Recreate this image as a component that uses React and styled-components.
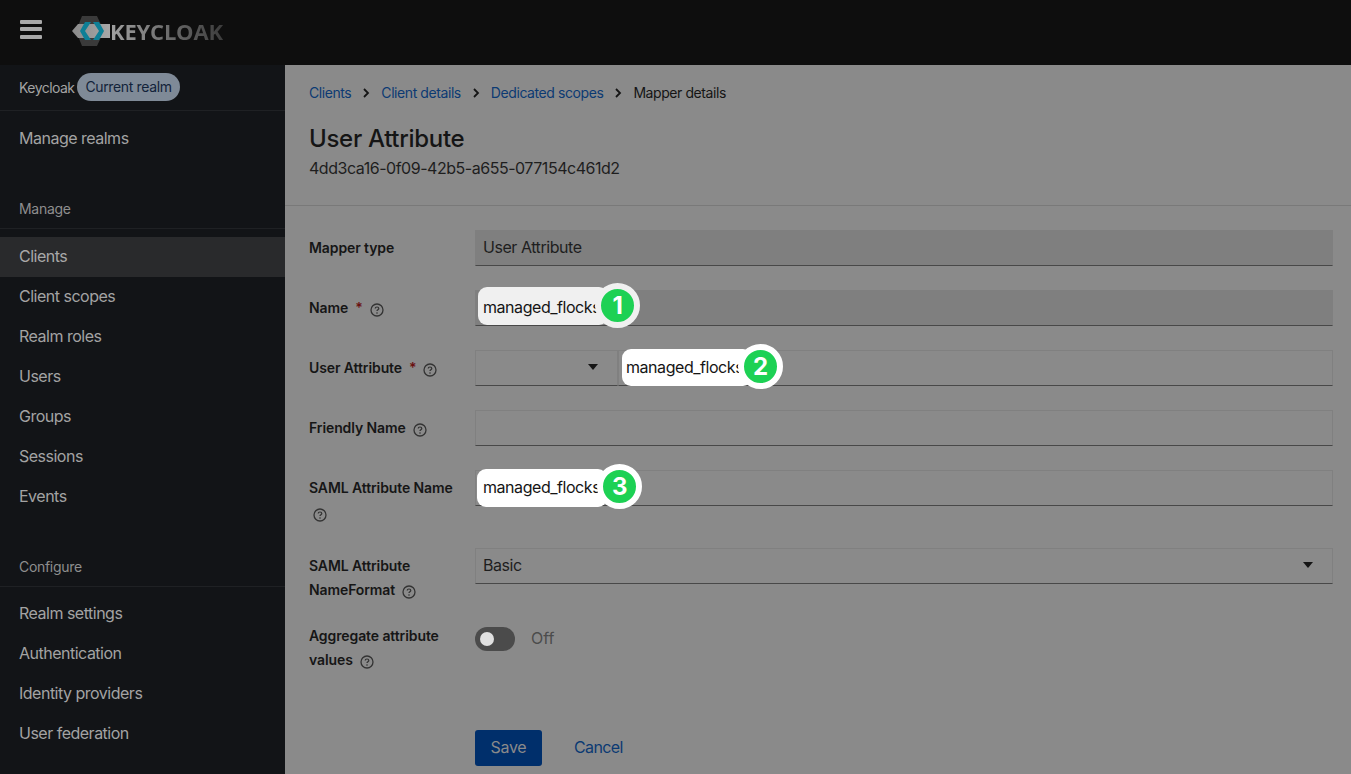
import React from "react";
import styled, { createGlobalStyle } from "styled-components";

const GlobalStyle = createGlobalStyle`
  html, body {
    margin: 0;
    height: 100%;
    overflow: hidden;
    background: #8a8a8a;
    font-family: "Inter", "Liberation Sans", sans-serif;
    letter-spacing: -0.3px;
  }
`;

const Page = styled.div`
  width: 1351px;
  height: 774px;
  display: flex;
  flex-direction: column;
  overflow: hidden;
`;

const Masthead = styled.header`
  height: 65px;
  flex: none;
  display: flex;
  align-items: center;
  padding-left: 20px;
  background: #0e0e0e;
`;

const Burger = styled.div`
  width: 22px;
  display: flex;
  flex-direction: column;
  gap: 3.5px;
  margin-right: 30px;
  margin-top: -7px;
  span {
    height: 4px;
    border-radius: 1px;
    background: #a9a9a9;
  }
`;

const Brand = styled.div`
  display: flex;
  align-items: center;
  margin-top: -4px;
`;

const BrandText = styled.span`
  font-family: "Open Sans", sans-serif;
  font-size: 22px;
  font-weight: 700;
  letter-spacing: -0.2px;
  background: linear-gradient(90deg, #a0a0a0, #3c3c3c);
  -webkit-background-clip: text;
  background-clip: text;
  color: transparent;
`;

const Body = styled.div`
  flex: 1;
  display: flex;
  min-height: 0;
`;

const Sidebar = styled.nav`
  width: 285px;
  flex: none;
  background: #121417;
  color: #a3a3a3;
  font-size: 16px;
  letter-spacing: -0.5px;
`;

const RealmRow = styled.div`
  height: 45px;
  box-sizing: content-box;
  display: flex;
  align-items: center;
  padding-left: 19px;
  margin-bottom: 8px;
  font-size: 14px;
  border-bottom: 1px solid #1f2124;
`;

const RealmName = styled.span`
  margin-top: -1px;
  letter-spacing: -0.55px;
`;

const RealmBadge = styled.span`
  margin: -1px 0 0 3px;
  height: 28px;
  line-height: 27px;
  padding: 0 8px;
  border-radius: 14px;
  background: #7f8a97;
  color: #12233a;
  font-size: 14px;
  letter-spacing: -0.35px;
`;

const NavItem = styled.div`
  height: 40px;
  line-height: 39px;
  padding-left: 19px;
  background: ${(p) => (p.$active ? "#292a2c" : "transparent")};
  color: ${(p) => (p.$active ? "#a8a8a8" : "#a3a3a3")};
`;

const NavHeading = styled.div`
  height: 35px;
  line-height: 32px;
  margin-top: 34px;
  margin-bottom: ${(p) => p.$bottom}px;
  padding-left: 19px;
  font-size: 14px;
  letter-spacing: -0.3px;
  color: #8e8e8e;
  border-bottom: 1px solid #1f2124;
`;

const Main = styled.main`
  flex: 1;
  background: #8a8a8a;
  color: #151515;
  min-width: 0;
`;

const PageHead = styled.div`
  height: 141px;
  box-sizing: border-box;
  padding: 18px 24px 0;
  border-bottom: 1px solid #797979;
`;

const Crumbs = styled.div`
  display: flex;
  align-items: center;
  height: 19px;
  font-size: 14px;
  letter-spacing: -0.42px;
`;

const Crumb = styled.span`
  color: ${(p) => (p.$current ? "#151515" : "#0c3a73")};
`;

const CrumbSep = styled.svg`
  width: 8px;
  height: 10px;
  margin: 0 11px;
`;

const Title = styled.h1`
  margin: 21px 0 0;
  font-size: 24px;
  line-height: 32px;
  font-weight: 500;
  color: #151515;
`;

const Subtitle = styled.div`
  margin-top: 1px;
  font-size: 16px;
  line-height: 24px;
  letter-spacing: -0.47px;
  color: #1e1e1e;
`;

const Form = styled.div`
  display: flex;
  flex-direction: column;
  gap: 24px;
  padding: 24px 18px 0 24px;
`;

const Row = styled.div`
  display: grid;
  grid-template-columns: 166px 1fr;
`;

const Label = styled.div`
  font-size: 14px;
  font-weight: 600;
  line-height: 24px;
  letter-spacing: -0.1px;
  padding-top: ${(p) => (p.$raised ? 0 : 6)}px;
  margin-top: ${(p) => (p.$raised ? -2 : 0)}px;
  color: #161616;
`;

const Required = styled.span`
  color: #6a1010;
  margin-left: 7px;
`;

const HelpSvg = styled.svg`
  width: 14px;
  height: 14px;
  margin-left: ${(p) => (p.$flush ? 4 : 7)}px;
  vertical-align: -4px;
`;

const HelpLine = styled.div`
  height: 24px;
  line-height: 26px;
`;

const Control = styled.div`
  position: relative;
  display: flex;
`;

const Input = styled.div`
  flex: ${(p) => (p.$narrow ? "none" : "1")};
  width: ${(p) => (p.$narrow ? "143px" : "auto")};
  height: 36px;
  box-sizing: border-box;
  display: flex;
  align-items: center;
  justify-content: space-between;
  padding: 0 7px 2px;
  font-size: 16px;
  letter-spacing: -0.45px;
  color: #1e1e1e;
  background: ${(p) => (p.$filled ? "#7f7f7f" : "transparent")};
  border: 1px solid ${(p) => (p.$filled ? "transparent" : "#808080")};
  border-bottom: 1px solid #484848;
`;

const Caret = styled.svg`
  width: 10px;
  height: 6px;
  margin-right: ${(p) => p.$right}px;
`;

const Callout = styled.div`
  position: absolute;
  left: ${(p) => p.$left}px;
  top: ${(p) => p.$top}px;
  width: 130px;
  height: ${(p) => p.$height}px;
  box-sizing: border-box;
  display: flex;
  align-items: center;
  padding: ${(p) => Math.max(p.$nudge, 0)}px 0 ${(p) => Math.max(-p.$nudge, 0)}px ${(p) => p.$pad}px;
  border-radius: 9px;
  font-size: 16px;
  letter-spacing: -0.45px;
  color: #151515;
  background: ${(p) => (p.$dim ? "#f0f0f0" : "#ffffff")};
`;

const Marker = styled.div`
  position: absolute;
  left: ${(p) => p.$left}px;
  top: ${(p) => p.$top}px;
  width: 33px;
  height: 33px;
  box-sizing: content-box;
  border: 6px solid ${(p) => (p.$dim ? "#f0f0f0" : "#ffffff")};
  border-radius: 50%;
  background: #1dd154;
  color: #ffffff;
  font-size: 24px;
  font-weight: 700;
  line-height: 33px;
  text-align: center;
`;

const ToggleRow = styled.div`
  display: flex;
  align-items: center;
  gap: 16px;
  height: 24px;
  margin-top: 1px;
  font-size: 16px;
  letter-spacing: 0;
  color: #4c4c4c;
`;

const ToggleState = styled.span`
  margin-top: -2px;
`;

const Toggle = styled.div`
  width: 40px;
  height: 24px;
  border-radius: 12px;
  background: #4b4b4b;
  position: relative;
  &::after {
    content: "";
    position: absolute;
    left: 5px;
    top: 5px;
    width: 14px;
    height: 14px;
    border-radius: 50%;
    background: #e0e0e0;
  }
`;

const Actions = styled.div`
  display: flex;
  align-items: center;
  gap: 32px;
  margin: 34px 0 0 166px;
`;

const SaveButton = styled.div`
  width: 67px;
  height: 36px;
  line-height: 35px;
  text-align: center;
  border-radius: 3px;
  background: #002f6b;
  color: #8a8a8a;
  font-size: 16px;
`;

const CancelLink = styled.div`
  color: #0c3a73;
  font-size: 16px;
  letter-spacing: -0.6px;
  padding-bottom: 2px;
`;

const HelpIcon = ({ flush }) => (
  <HelpSvg $flush={flush} viewBox="0 0 14 14">
    <circle cx="7" cy="7" r="6" fill="none" stroke="#333" strokeWidth="1.3" />
    <path d="M5.2 5.6c0-1 .8-1.6 1.8-1.6s1.8.6 1.8 1.5c0 1.3-1.8 1.3-1.8 2.6" fill="none" stroke="#333" strokeWidth="1.2" />
    <circle cx="7" cy="10" r=".8" fill="#333" />
  </HelpSvg>
);

const CaretIcon = ({ right }) => (
  <Caret $right={right} viewBox="0 0 10 6">
    <path d="M0 0h10L5 6z" fill="#151515" />
  </Caret>
);

const Sep = () => (
  <CrumbSep viewBox="0 0 8 10">
    <path d="M2 1l4 4-4 4" fill="none" stroke="#151515" strokeWidth="1.8" />
  </CrumbSep>
);

const Logo = () => (
  <svg width="38" height="32" viewBox="0 0 38 32">
    <defs>
      <linearGradient id="band" x1="0" x2="1" y1="0" y2="0">
        <stop offset="0" stopColor="#8a8a8a" />
        <stop offset="1" stopColor="#a8a8a8" />
      </linearGradient>
    </defs>
    <path d="M10 1h15l7 15-7 15H10L4 16z" fill="#3a3a3a" />
    <path d="M0 16L6 9h32v14H6z" fill="url(#band)" />
    <path d="M13 7h6l-6 9 6 9h-6L8 16z" fill="#0e7f96" />
    <path d="M21 7h6l5 9-5 9h-6l6-9z" fill="#0e7f96" />
  </svg>
);

const topItems = ["Clients", "Client scopes", "Realm roles", "Users", "Groups", "Sessions", "Events"];
const configureItems = ["Realm settings", "Authentication", "Identity providers", "User federation"];

export default function App() {
  return (
    <Page>
      <GlobalStyle />
      <Masthead>
        <Burger>
          <span />
          <span />
          <span />
        </Burger>
        <Brand>
          <Logo />
          <BrandText>KEYCLOAK</BrandText>
        </Brand>
      </Masthead>
      <Body>
        <Sidebar>
          <RealmRow>
            <RealmName>Keycloak</RealmName>
            <RealmBadge>Current realm</RealmBadge>
          </RealmRow>
          <NavItem>Manage realms</NavItem>
          <NavHeading $bottom={8}>Manage</NavHeading>
          {topItems.map((item) => (
            <NavItem key={item} $active={item === "Clients"}>
              {item}
            </NavItem>
          ))}
          <NavHeading $bottom={7}>Configure</NavHeading>
          {configureItems.map((item) => (
            <NavItem key={item}>{item}</NavItem>
          ))}
        </Sidebar>
        <Main>
          <PageHead>
            <Crumbs>
              <Crumb>Clients</Crumb>
              <Sep />
              <Crumb>Client details</Crumb>
              <Sep />
              <Crumb>Dedicated scopes</Crumb>
              <Sep />
              <Crumb $current>Mapper details</Crumb>
            </Crumbs>
            <Title>User Attribute</Title>
            <Subtitle>4dd3ca16-0f09-42b5-a655-077154c461d2</Subtitle>
          </PageHead>
          <Form>
            <Row>
              <Label>Mapper type</Label>
              <Control>
                <Input $filled>User Attribute</Input>
              </Control>
            </Row>
            <Row>
              <Label>
                Name<Required>*</Required>
                <HelpIcon />
              </Label>
              <Control>
                <Input $filled />
                <Callout $left={3} $top={-3} $height={38} $pad={5} $nudge={2} $dim>
                  managed_flocks
                </Callout>
                <Marker $left={120} $top={-7} $dim>
                  1
                </Marker>
              </Control>
            </Row>
            <Row>
              <Label>
                User Attribute<Required>*</Required>
                <HelpIcon />
              </Label>
              <Control>
                <Input $narrow>
                  <span />
                  <CaretIcon right={12} />
                </Input>
                <Input />
                <Callout $left={147} $top={-1} $height={37} $pad={4} $nudge={-1}>
                  managed_flocks
                </Callout>
                <Marker $left={263} $top={-6}>
                  2
                </Marker>
              </Control>
            </Row>
            <Row>
              <Label>
                Friendly Name
                <HelpIcon />
              </Label>
              <Control>
                <Input />
              </Control>
            </Row>
            <Row>
              <Label>
                SAML Attribute Name
                <HelpLine>
                  <HelpIcon flush />
                </HelpLine>
              </Label>
              <Control>
                <Input />
                <Callout $left={2} $top={-1} $height={38} $pad={6} $nudge={-2}>
                  managed_flocks
                </Callout>
                <Marker $left={122} $top={-6}>
                  3
                </Marker>
              </Control>
            </Row>
            <Row>
              <Label>
                SAML Attribute
                <br />
                NameFormat
                <HelpIcon />
              </Label>
              <Control>
                <Input>
                  Basic
                  <CaretIcon right={12} />
                </Input>
              </Control>
            </Row>
            <Row>
              <Label $raised>
                Aggregate attribute
                <br />
                values
                <HelpIcon />
              </Label>
              <ToggleRow>
                <Toggle />
                <ToggleState>Off</ToggleState>
              </ToggleRow>
            </Row>
            <Actions>
              <SaveButton>Save</SaveButton>
              <CancelLink>Cancel</CancelLink>
            </Actions>
          </Form>
        </Main>
      </Body>
    </Page>
  );
}
